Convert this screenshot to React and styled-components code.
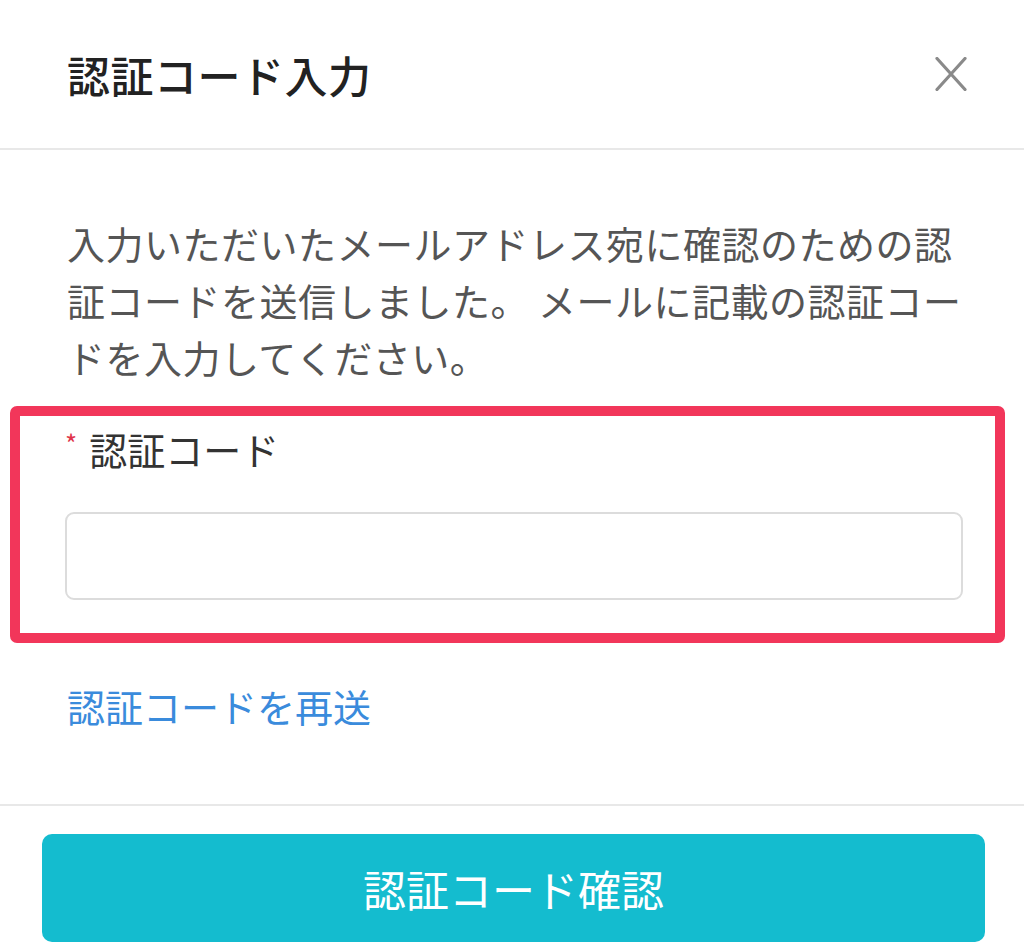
import styled, { createGlobalStyle } from 'styled-components';

const GlobalStyle = createGlobalStyle`
  html, body {
    margin: 0;
    padding: 0;
    background: #ffffff;
  }
  body {
    font-family: "Noto Sans CJK JP", "Noto Sans", sans-serif;
  }
  * {
    box-sizing: border-box;
  }
`;

const Modal = styled.div`
  width: 1024px;
  height: 951px;
  background: #ffffff;
  display: flex;
  flex-direction: column;
  overflow: hidden;
`;

const Header = styled.header`
  height: 150px;
  padding: 0 57px 0 67px;
  display: flex;
  align-items: center;
  justify-content: space-between;
  border-bottom: 2px solid #e8e8e8;
`;

const Title = styled.h1`
  margin: 0;
  font-size: 43px;
  font-weight: 500;
  color: #222;
  line-height: 1;
  letter-spacing: 0.5px;
`;

const CloseButton = styled.button`
  width: 32px;
  height: 34px;
  padding: 0;
  border: none;
  background: none;
  cursor: pointer;
  display: flex;
  color: #8a8a8a;
`;

const Body = styled.div`
  padding: 64px 19px 73px 10px;
  display: flex;
  flex-direction: column;
`;

const Description = styled.p`
  margin: 0 0 21px 57px;
  width: 902px;
  font-size: 38px;
  line-height: 57px;
  letter-spacing: 0.5px;
  color: #555;
`;

const FieldBox = styled.div`
  border: 10px solid #f2365a;
  border-radius: 7px;
  padding: 8px 32px 33px 45px;
`;

const Label = styled.label`
  display: flex;
  align-items: flex-start;
  font-size: 38px;
  line-height: 50px;
  color: #333;
  margin-bottom: 38px;
`;

const Required = styled.span`
  color: #e0344a;
  font-size: 26px;
  line-height: 38px;
  margin-right: 12px;
`;

const CodeInput = styled.input`
  width: 100%;
  height: 88px;
  border: 2px solid #dcdcdc;
  border-radius: 9px;
  padding: 0 20px;
  font-size: 36px;
  font-family: inherit;
  outline: none;
`;

const ResendLink = styled.a`
  align-self: flex-start;
  margin: 38px 0 0 57px;
  font-size: 38px;
  line-height: 50px;
  color: #3a8bdc;
  text-decoration: none;
  cursor: pointer;
`;

const Footer = styled.footer`
  border-top: 2px solid #e8e8e8;
  padding: 28px 39px 0 42px;
`;

const ConfirmButton = styled.button`
  width: 100%;
  height: 108px;
  border: none;
  border-radius: 10px;
  background: #14bccf;
  color: #ffffff;
  font-family: inherit;
  font-size: 43px;
  cursor: pointer;
`;

const CloseIcon = () => (
  <svg width="32" height="34" viewBox="0 0 32 34" fill="none">
    <path
      d="M2 1.5 L30 32.5 M30 1.5 L2 32.5"
      stroke="currentColor"
      strokeWidth="3.2"
      strokeLinecap="round"
    />
  </svg>
);

export default function App() {
  return (
    <>
      <GlobalStyle />
      <Modal>
        <Header>
          <Title>認証コード入力</Title>
          <CloseButton aria-label="閉じる">
            <CloseIcon />
          </CloseButton>
        </Header>
        <Body>
          <Description>
            入力いただいたメールアドレス宛に確認のための認証コードを送信しました。
            メールに記載の認証コードを入力してください。
          </Description>
          <FieldBox>
            <Label htmlFor="code">
              <Required>*</Required>
              認証コード
            </Label>
            <CodeInput id="code" type="text" />
          </FieldBox>
          <ResendLink>認証コードを再送</ResendLink>
        </Body>
        <Footer>
          <ConfirmButton>認証コード確認</ConfirmButton>
        </Footer>
      </Modal>
    </>
  );
}
